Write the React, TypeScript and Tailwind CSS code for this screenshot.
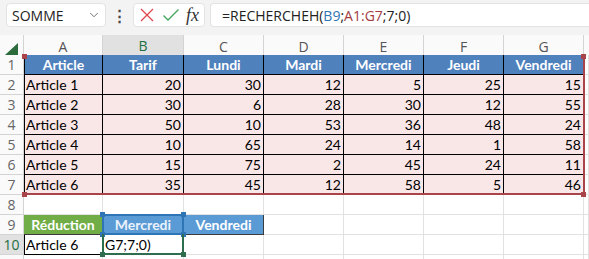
import React from 'react';
import { ChevronDown } from 'lucide-react';

const cellFont = { fontFamily: 'Lato, "Liberation Sans", sans-serif' };
const uiFont = { fontFamily: '"Open Sans", "Noto Sans", sans-serif' };

const columns = ['A', 'B', 'C', 'D', 'E', 'F', 'G'];
const headers = ['Article', 'Tarif', 'Lundi', 'Mardi', 'Mercredi', 'Jeudi', 'Vendredi'];
const rows: [string, number[]][] = [
  ['Article 1', [20, 30, 12, 5, 25, 15]],
  ['Article 2', [30, 6, 28, 30, 12, 55]],
  ['Article 3', [50, 10, 53, 36, 48, 24]],
  ['Article 4', [10, 65, 24, 14, 1, 58]],
  ['Article 5', [15, 75, 2, 45, 24, 11]],
  ['Article 6', [35, 45, 12, 58, 5, 46]],
];

const gridCols = 'grid grid-cols-[24px_79px_81px_80px_80px_80px_80px_80px_1fr]';

function RowHead({ n, active }: { n?: number; active?: boolean }) {
  return (
    <div
      className={
        'h-[20px] border-b border-r border-[#d4d4d4] flex items-center justify-center text-[14px] ' +
        (active ? 'bg-[#e1e1e1] text-[#1e6e42]' : 'bg-[#fafafa] text-[#666]')
      }
      style={uiFont}
    >
      {n}
    </div>
  );
}

function Blank() {
  return <div className="h-[20px] border-b border-r border-[#e1e1e1] bg-white" />;
}

function Handle({ className }: { className: string }) {
  return <div className={'absolute w-[5px] h-[5px] ' + className} />;
}

export default function App() {
  return (
    <div className="w-[589px] h-[259px] overflow-hidden bg-white relative select-none">
      {/* Formula bar */}
      <div className="h-[35px] bg-[#f3f3f3] flex items-start pt-[3px] pl-[6px] gap-[5px]">
        <div
          className="w-[100px] h-[24px] bg-white rounded-[4px] border border-[#e3e3e3] flex items-center justify-between pl-[5px] pr-[4px] text-[14px] text-[#222]"
          style={uiFont}
        >
          <span>SOMME</span>
          <ChevronDown size={14} strokeWidth={1.4} className="text-[#555]" />
        </div>
        <div className="w-[17px] h-[24px] flex items-center justify-center text-[#444] text-[15px] font-bold">
          ⋮
        </div>
        <div className="w-[72px] h-[24px] bg-white rounded-[4px] border border-[#e3e3e3] flex items-center justify-between px-[5px]">
          <svg width="16" height="16" viewBox="0 0 16 16">
            <path d="M2 2 L14 14 M14 2 L2 14" stroke="#e0474c" strokeWidth="1.3" fill="none" />
          </svg>
          <svg width="18" height="16" viewBox="0 0 18 16">
            <path d="M1.5 8.5 L6 13 L16.5 2.5" stroke="#3fa55b" strokeWidth="1.3" fill="none" />
          </svg>
          <span
            className="italic text-[18px] text-[#333] leading-none"
            style={{ fontFamily: '"Liberation Serif", "DejaVu Serif", serif' }}
          >
            fx
          </span>
        </div>
        <div
          className="flex-1 h-[24px] bg-white rounded-l-[4px] border border-r-0 border-[#e3e3e3] flex items-center pl-[11px] text-[14px] text-[#222]"
          style={uiFont}
        >
          <span>=RECHERCHEH(</span>
          <span className="text-[#2f75b5]">B9</span>
          <span>;</span>
          <span className="text-[#a23c41]">A1:G7</span>
          <span>;7;0)</span>
        </div>
      </div>

      {/* Column headers */}
      <div className={gridCols + ' h-[20px]'} style={uiFont}>
        <div className="border-b border-r border-[#d4d4d4] bg-[#fafafa] flex items-end justify-center pb-[2px]">
          <svg width="13" height="12" viewBox="0 0 13 12">
            <path d="M13 0 L13 12 L0 12 Z" fill="#2b6b3c" />
          </svg>
        </div>
        {columns.map((c) =>
          c === 'B' ? (
            <div
              key={c}
              className="bg-[#e1e1e1] border-b-2 border-b-[#1e6e42] border-r border-r-[#d4d4d4] flex items-center justify-center text-[14px] text-[#1e6e42]"
            >
              {c}
            </div>
          ) : (
            <div
              key={c}
              className="bg-[#fafafa] border-b border-r border-[#d4d4d4] flex items-center justify-center text-[14px] text-[#555]"
            >
              {c}
            </div>
          )
        )}
        <div className="bg-[#fafafa] border-b border-[#d4d4d4]" />
      </div>

      {/* Sheet body */}
      <div className="relative" style={cellFont}>
        {/* Row 1 */}
        <div className={gridCols}>
          <RowHead n={1} />
          {headers.map((h, i) => (
            <div
              key={h}
              className={
                'h-[20px] bg-[#4f81bd] border-b border-r border-black flex items-center justify-center text-white font-bold text-[14px] ' +
                (i === 0 ? 'border-l' : '')
              }
            >
              {h}
            </div>
          ))}
          <Blank />
        </div>

        {/* Rows 2-7 */}
        {rows.map(([name, vals], r) => (
          <div key={name} className={gridCols}>
            <RowHead n={r + 2} />
            <div className="h-[20px] bg-[#f9e7e7] border-b border-r border-l border-black flex items-center pl-[1px] text-[14px] text-black">
              {name}
            </div>
            {vals.map((v, i) => (
              <div
                key={i}
                className="h-[20px] bg-[#f9e7e7] border-b border-r border-black flex items-center justify-end pr-[2px] text-[14px] text-black"
              >
                {v}
              </div>
            ))}
            <Blank />
          </div>
        ))}

        {/* Row 8 */}
        <div className={gridCols}>
          <RowHead n={8} />
          {columns.map((c) => (
            <Blank key={c} />
          ))}
          <Blank />
        </div>

        {/* Row 9 */}
        <div className={gridCols}>
          <RowHead n={9} />
          <div className="h-[20px] bg-[#70ad47] border-b border-r border-[#3b3b3b] flex items-center justify-center text-white font-bold text-[14px]">
            Réduction
          </div>
          <div className="h-[20px] bg-[#5b9bd5] border-b border-r border-[#3b3b3b] flex items-center justify-center text-[#eaf2fb] font-bold text-[14px]">
            Mercredi
          </div>
          <div className="h-[20px] bg-[#5b9bd5] border-b border-r border-[#3b3b3b] flex items-center justify-center text-white font-bold text-[14px]">
            Vendredi
          </div>
          {columns.slice(3).map((c) => (
            <Blank key={c} />
          ))}
          <Blank />
        </div>

        {/* Row 10 */}
        <div className={gridCols}>
          <RowHead n={10} active />
          <div className="h-[20px] bg-white border-b border-r border-l border-black flex items-center pl-[1px] text-[14px] text-black">
            Article 6
          </div>
          <div className="h-[20px] bg-white border-b border-r border-[#e1e1e1] flex items-center pl-[2px] text-[14px] text-black">
            G7;7;0)
          </div>
          {columns.slice(2).map((c) => (
            <Blank key={c} />
          ))}
          <Blank />
        </div>

        {/* Row 11 (cut off) */}
        <div className={gridCols}>
          <RowHead />
          {columns.map((c) => (
            <Blank key={c} />
          ))}
          <Blank />
        </div>

        {/* A1:G7 reference highlight */}
        <div className="absolute left-[23px] top-[-1px] w-[562px] h-[141px] border-r-2 border-b-2 border-[#a8444a] pointer-events-none" />
        <Handle className="left-[22px] top-[-1px] w-[3px] h-[3px] bg-[#a8444a]" />
        <Handle className="left-[581px] top-[-1px] w-[4px] h-[3px] bg-[#a8444a]" />
        <Handle className="left-[581px] top-[137px] bg-[#a8444a]" />
        <Handle className="left-[22px] top-[137px] w-[3px] h-[3px] bg-[#a8444a]" />

        {/* B9 reference highlight */}
        <div className="absolute left-[102px] top-[159px] w-[82px] h-[21px] border-2 border-[#2e75b6] pointer-events-none" />
        <Handle className="left-[100px] top-[157px] bg-[#2e75b6]" />
        <Handle className="left-[181px] top-[157px] bg-[#2e75b6]" />
        <Handle className="left-[100px] top-[177px] bg-[#2e75b6]" />
        <Handle className="left-[181px] top-[177px] bg-[#2e75b6]" />

        {/* B10 active cell */}
        <div className="absolute left-[102px] top-[179px] w-[82px] h-[21px] border-2 border-t-0 border-[#2e6e4e] pointer-events-none" />
        <Handle className="left-[100px] top-[197px] bg-[#2e6e4e]" />
        <Handle className="left-[181px] top-[197px] bg-[#2e6e4e]" />
      </div>
    </div>
  );
}
